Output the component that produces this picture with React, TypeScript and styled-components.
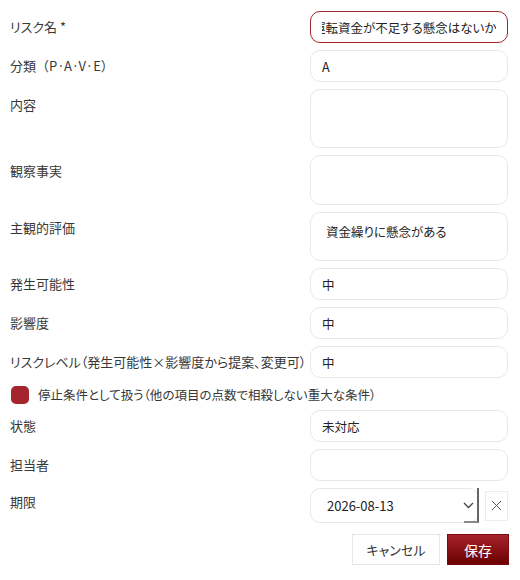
import React, { useEffect, useRef } from 'react';
import styled, { createGlobalStyle } from 'styled-components';

const GlobalStyle = createGlobalStyle`
  body {
    margin: 0;
    background: #ffffff;
    font-family: "Noto Sans CJK JP", "Noto Sans", sans-serif;
    font-feature-settings: "palt";
    color: #333333;
  }
`;

const Form = styled.div`
  width: 520px;
  box-sizing: border-box;
  padding: 11px 12px 0 10px;
  display: flex;
  flex-direction: column;
  gap: 7px;
`;

const Row = styled.div`
  display: grid;
  grid-template-columns: 300px 198px;
  align-items: start;
`;

const Label = styled.label<{ $top?: number }>`
  font-size: 13px;
  line-height: 16px;
  padding-top: ${({ $top }) => $top ?? 8}px;
  color: #383838;
  white-space: nowrap;
`;

const Paren = styled.span`
  font-feature-settings: normal;
`;

const TextInput = styled.input<{ $active?: boolean }>`
  box-sizing: border-box;
  width: 198px;
  height: 32px;
  padding: 0 11px;
  border: 1px solid ${({ $active }) => ($active ? '#a4262c' : '#e8e8e8')};
  border-radius: 10px;
  font-family: inherit;
  font-feature-settings: "palt";
  font-size: 12.5px;
  color: #222222;
  background: #ffffff;
  outline: none;
  caret-color: #222222;
`;

const TextArea = styled.textarea<{ $height: number }>`
  box-sizing: border-box;
  width: 198px;
  height: ${({ $height }) => $height}px;
  padding: 10px 15px;
  border: 1px solid #e8e8e8;
  border-radius: 10px;
  font-family: inherit;
  font-feature-settings: "palt";
  font-size: 12.5px;
  line-height: 18px;
  color: #222222;
  resize: none;
  outline: none;
  display: block;
`;

const CheckRow = styled.label`
  display: flex;
  align-items: center;
  gap: 9px;
  padding-left: 1px;
  height: 17px;
  margin-top: 1px;
  font-size: 12.5px;
  color: #383838;
`;

const CheckBox = styled.span`
  width: 18px;
  height: 18px;
  border-radius: 5px;
  background: #a4262c;
  flex-shrink: 0;
`;

const DateWrap = styled.div`
  display: flex;
  align-items: center;
  gap: 6px;
`;

const DateBox = styled.div`
  position: relative;
  box-sizing: border-box;
  width: 169px;
  height: 35px;
  padding: 0 4px 0 16px;
  border: 1px solid #e8e8e8;
  border-radius: 10px;
  display: flex;
  align-items: center;
  justify-content: space-between;
  font-size: 13px;
  color: #222222;

  &::after {
    content: '';
    position: absolute;
    right: -1px;
    bottom: -1px;
    width: 15px;
    height: 35px;
    border-right: 2px solid #666666;
    border-bottom: 2px solid #8a8a8a;
    box-sizing: border-box;
  }
`;

const ClearButton = styled.button`
  box-sizing: border-box;
  width: 23px;
  height: 30px;
  padding: 0;
  border: 1px solid #ececec;
  background: #ffffff;
  display: flex;
  align-items: center;
  justify-content: center;
  color: #555555;
`;

const Actions = styled.div`
  display: flex;
  justify-content: flex-end;
  gap: 7px;
  margin-top: 4px;
  margin-right: -1px;
`;

const Button = styled.button<{ $primary?: boolean }>`
  box-sizing: border-box;
  height: 31px;
  padding: 0;
  width: ${({ $primary }) => ($primary ? '62px' : '88px')};
  border: 1px solid ${({ $primary }) => ($primary ? '#7a0a0f' : '#e6e6e6')};
  background: ${({ $primary }) =>
    $primary ? 'linear-gradient(#a6232b, #6a0000)' : '#ffffff'};
  color: ${({ $primary }) => ($primary ? '#ffffff' : '#333333')};
  font-family: inherit;
  font-feature-settings: "palt";
  font-size: ${({ $primary }) => ($primary ? '14px' : '13px')};
`;

const Chevron = () => (
  <svg width="11" height="7" viewBox="0 0 11 7" fill="none">
    <path d="M1 1 L5.5 5.5 L10 1" stroke="#444" strokeWidth="1.3" />
  </svg>
);

const Cross = () => (
  <svg width="11" height="11" viewBox="0 0 11 11" fill="none">
    <path d="M1 1 L10 10 M10 1 L1 10" stroke="#555" strokeWidth="1" />
  </svg>
);

const App: React.FC = () => {
  const nameRef = useRef<HTMLInputElement>(null);

  useEffect(() => {
    const el = nameRef.current;
    if (!el) return;
    el.focus();
    const len = el.value.length;
    el.setSelectionRange(len, len);
    el.scrollLeft = el.scrollWidth;
  }, []);

  return (
    <>
      <GlobalStyle />
      <Form>
        <Row>
          <Label>リスク名 *</Label>
          <TextInput ref={nameRef} $active defaultValue="運転資金が不足する懸念はないか" />
        </Row>
        <Row>
          <Label>
            分類<Paren>（</Paren>P·A·V·E<Paren>）</Paren>
          </Label>
          <TextInput defaultValue="A" />
        </Row>
        <Row>
          <Label>内容</Label>
          <TextArea $height={59} defaultValue="" />
        </Row>
        <Row>
          <Label>観察事実</Label>
          <TextArea $height={50} defaultValue="" />
        </Row>
        <Row>
          <Label>主観的評価</Label>
          <TextArea $height={49} defaultValue="資金繰りに懸念がある" />
        </Row>
        <Row>
          <Label>発生可能性</Label>
          <TextInput defaultValue="中" />
        </Row>
        <Row>
          <Label>影響度</Label>
          <TextInput defaultValue="中" />
        </Row>
        <Row>
          <Label>リスクレベル（発生可能性×影響度から提案、変更可）</Label>
          <TextInput defaultValue="中" />
        </Row>
        <CheckRow>
          <CheckBox />
          <span>停止条件として扱う（他の項目の点数で相殺しない重大な条件）</span>
        </CheckRow>
        <Row>
          <Label>状態</Label>
          <TextInput defaultValue="未対応" />
        </Row>
        <Row>
          <Label>担当者</Label>
          <TextInput defaultValue="" />
        </Row>
        <Row>
          <Label $top={6}>期限</Label>
          <DateWrap>
            <DateBox>
              <span>2026-08-13</span>
              <Chevron />
            </DateBox>
            <ClearButton>
              <Cross />
            </ClearButton>
          </DateWrap>
        </Row>
        <Actions>
          <Button>キャンセル</Button>
          <Button $primary>保存</Button>
        </Actions>
      </Form>
    </>
  );
};

export default App;
